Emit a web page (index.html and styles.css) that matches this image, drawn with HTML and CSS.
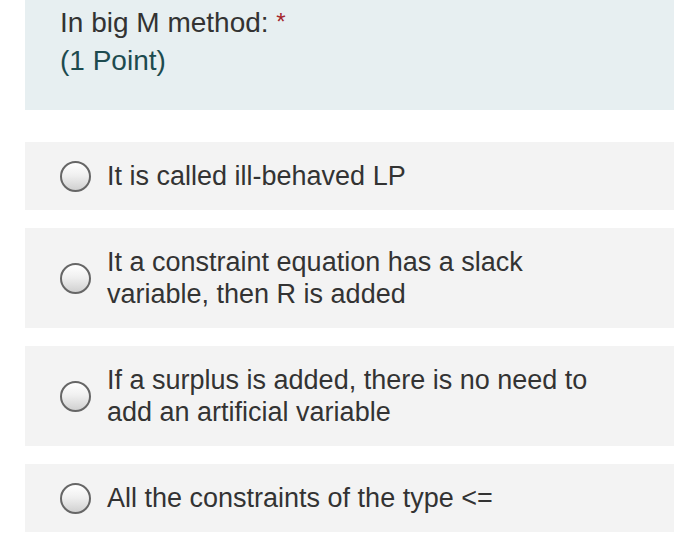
FILE: index.html
```html
<!DOCTYPE html>
<html>
<head>
<meta charset="utf-8">
<link rel="stylesheet" href="styles.css">
</head>
<body>
<div class="page">
  <div class="question">
    <div class="title">In big M method: <span class="req">*</span></div>
    <div class="points">(1 Point)</div>
  </div>
  <div class="options">
    <label class="option"><span class="radio"></span><span class="text">It is called ill-behaved LP</span></label>
    <label class="option"><span class="radio"></span><span class="text">It a constraint equation has a slack<br>variable, then R is added</span></label>
    <label class="option"><span class="radio"></span><span class="text">If a surplus is added, there is no need to<br>add an artificial variable</span></label>
    <label class="option"><span class="radio"></span><span class="text">All the constraints of the type &lt;=</span></label>
  </div>
</div>
</body>
</html>
```

FILE: styles.css
```css
html, body {
  margin: 0;
  padding: 0;
  background: #ffffff;
}
body {
  font-family: "Liberation Sans", Arial, sans-serif;
  color: #333333;
}
.page {
  padding: 0 26px 0 25px;
}
.question {
  background: #e7eff1;
  padding: 3px 35px 31px;
  height: 76px;
  font-size: 28px;
  line-height: 38px;
}
.title {
  color: #333333;
}
.req {
  color: #a4262c;
  font-size: 24px;
  vertical-align: 2px;
}
.points {
  color: #1d4b4f;
}
.options {
  display: flex;
  flex-direction: column;
  gap: 18px;
  margin-top: 32px;
}
.option {
  display: flex;
  align-items: center;
  background: #f3f3f3;
  padding: 18px 20px 18px 35px;
  font-size: 27px;
  line-height: 32px;
}
.radio {
  flex: none;
  width: 27px;
  height: 27px;
  border: 2px solid #666666;
  border-radius: 50%;
  background: linear-gradient(to bottom, #ffffff 0%, #f0f0f0 45%, #d0d0d0 100%);
  margin-right: 16px;
}
.text {
  color: #333333;
}
```
